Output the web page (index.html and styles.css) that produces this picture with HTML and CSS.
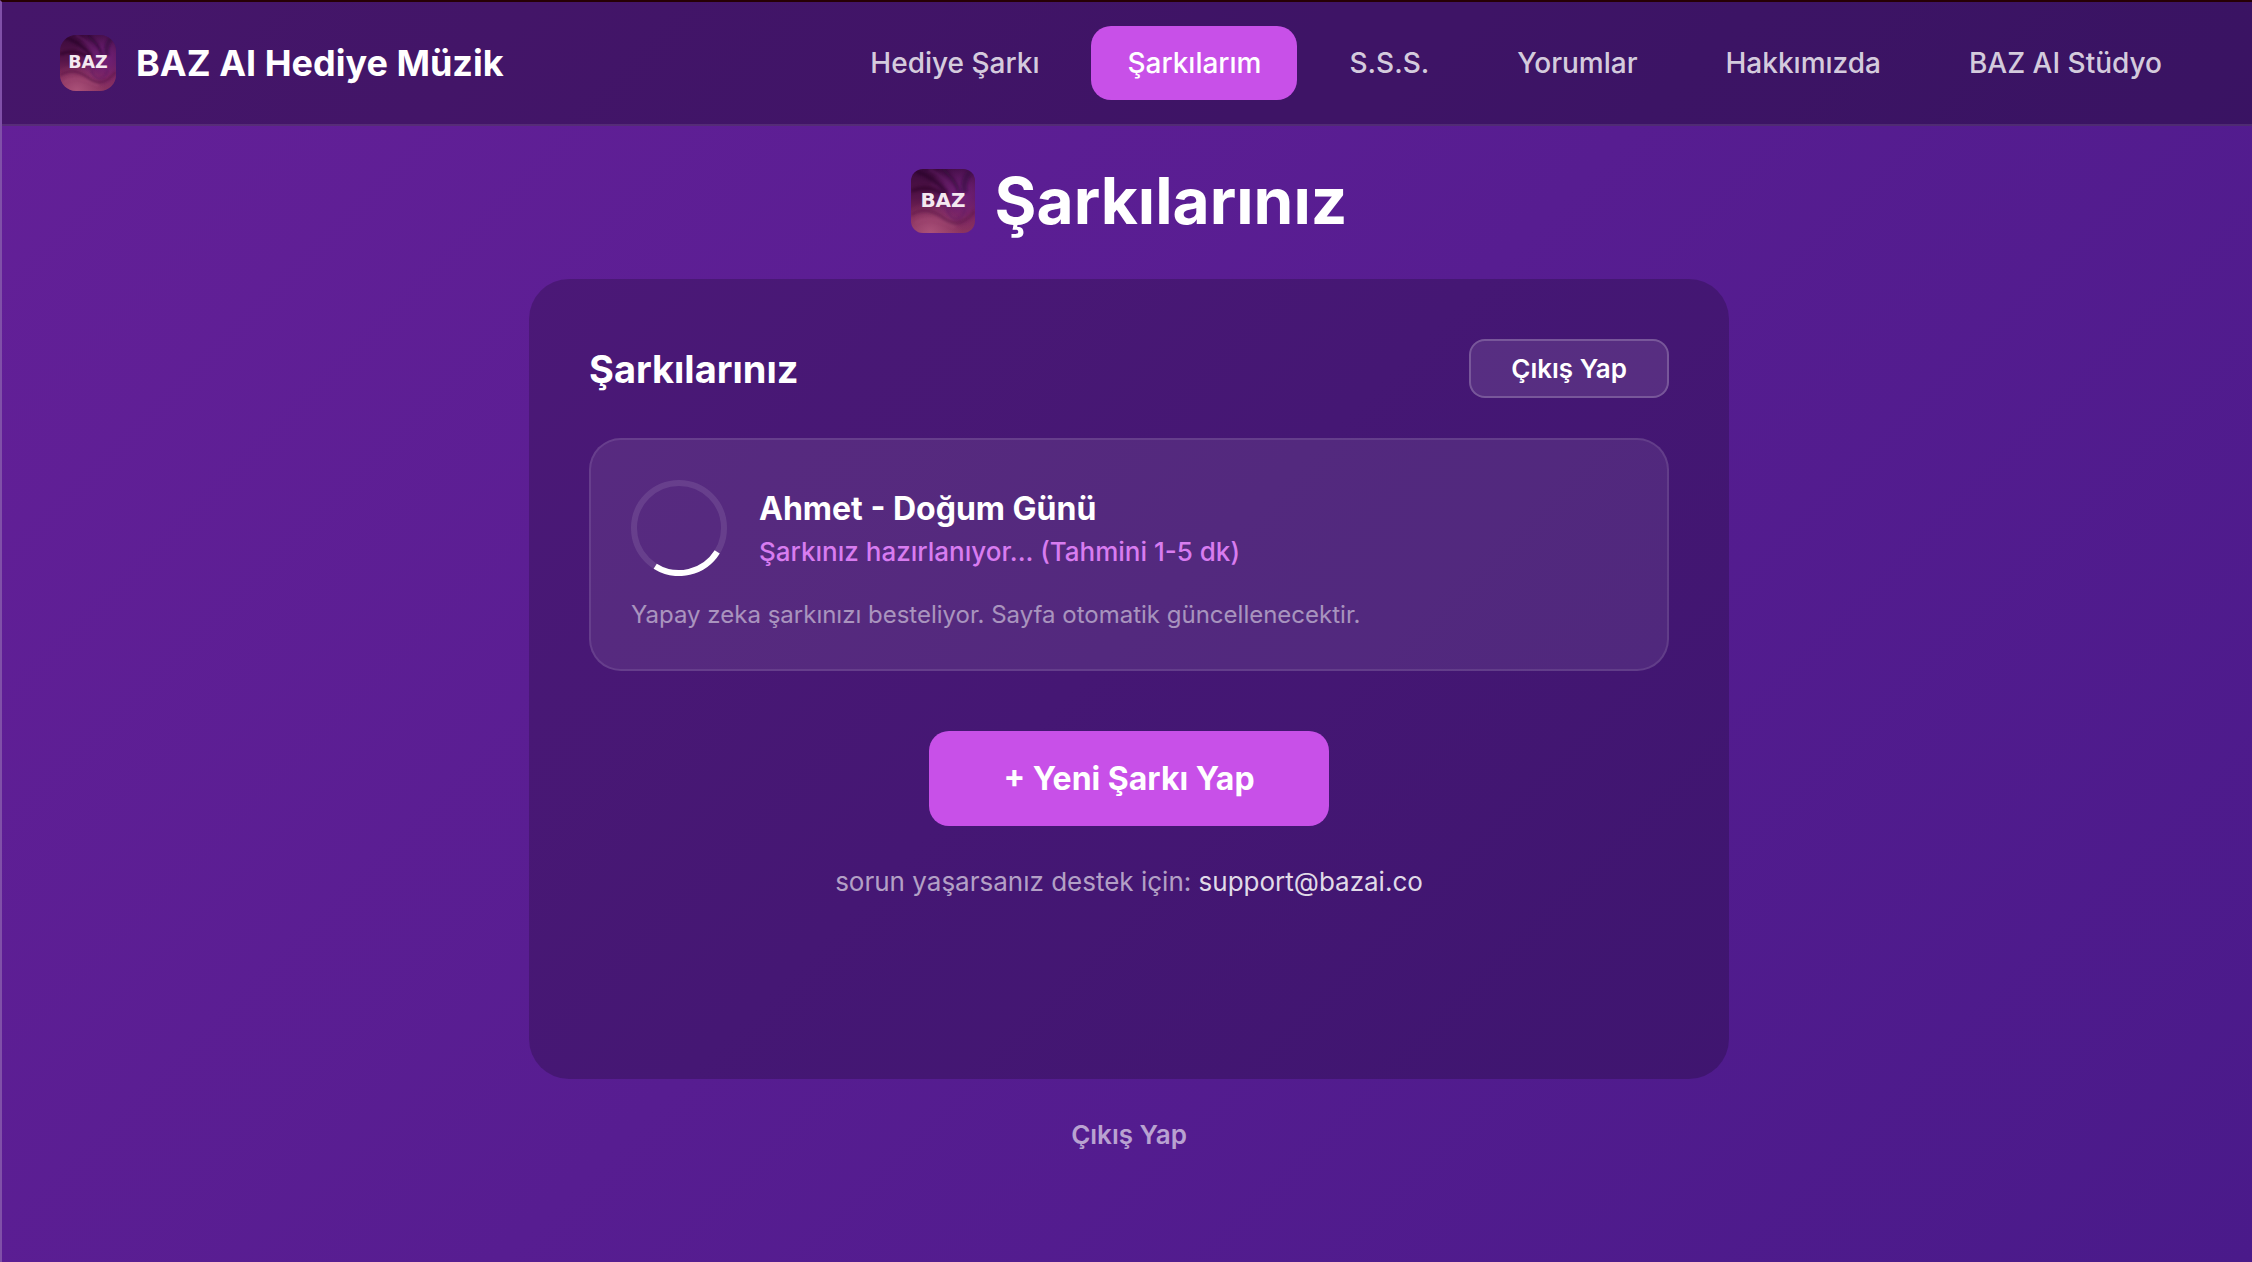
FILE: index.html
```html
<!DOCTYPE html>
<html lang="tr">
<head>
  <meta charset="UTF-8" />
  <meta name="viewport" content="width=device-width, initial-scale=1" />
  <title>Şarkılarınız - BAZ AI Hediye Müzik</title>
  <link rel="stylesheet" href="styles.css">
</head>
<body>
  <!-- Shared paint for both logos -->
  <svg class="defs" width="0" height="0" aria-hidden="true">
    <defs>
      <linearGradient id="logo-base" x1="0" y1="0" x2="0" y2="1">
        <stop offset="0" stop-color="#3a0a3c" />
        <stop offset="0.45" stop-color="#561449" />
        <stop offset="0.75" stop-color="#7f2858" />
        <stop offset="1" stop-color="#8a3460" />
      </linearGradient>
      <radialGradient id="logo-violet" cx="0.8" cy="0.4" r="0.55">
        <stop offset="0" stop-color="#7a2488" stop-opacity="0.8" />
        <stop offset="1" stop-color="#7a2488" stop-opacity="0" />
      </radialGradient>
      <radialGradient id="logo-glow" cx="0.3" cy="1" r="0.5">
        <stop offset="0" stop-color="#b3597f" stop-opacity="0.8" />
        <stop offset="1" stop-color="#b3597f" stop-opacity="0" />
      </radialGradient>
      <filter id="logo-soft"><feGaussianBlur stdDeviation="1.5" /></filter>
      <symbol id="logo" viewBox="0 0 64 64" preserveAspectRatio="none">
        <rect width="64" height="64" fill="url(#logo-base)" />
        <rect width="64" height="64" fill="url(#logo-violet)" />
        <rect width="64" height="64" fill="url(#logo-glow)" />
        <g fill="none" opacity="0.6" filter="url(#logo-soft)">
          <path d="M4 2C18 6 28 14 36 24" stroke="#260528" stroke-width="4" />
          <path d="M18 0C30 6 38 14 42 24" stroke="#6d2470" stroke-width="2" />
          <path d="M32 0C40 8 46 14 48 24" stroke="#2b0733" stroke-width="3" />
          <path d="M60 2C54 8 52 16 54 24" stroke="#35093f" stroke-width="6" />
          <path d="M0 22C14 16 26 20 36 28" stroke="#2c0628" stroke-width="4" />
          <path d="M0 46C12 38 24 42 34 50S54 54 64 42" stroke="#5c1746" stroke-width="3" />
          <path d="M36 40C38 52 52 54 54 40" stroke="#5a1660" stroke-width="2" />
          <path d="M4 54C18 46 30 52 44 58" stroke="#a34a73" stroke-width="2" />
        </g>
        <text class="logo-text" x="32" y="38" text-anchor="middle">BAZ</text>
      </symbol>
    </defs>
  </svg>

  <header class="navbar">
    <a class="brand" href="#">
      <svg class="brand-logo" aria-hidden="true"><use href="#logo" /></svg>
      <span>BAZ AI Hediye Müzik</span>
    </a>
    <nav class="nav-links">
      <a href="#">Hediye Şarkı</a>
      <a class="active" href="#">Şarkılarım</a>
      <a href="#">S.S.S.</a>
      <a href="#">Yorumlar</a>
      <a href="#">Hakkımızda</a>
      <a href="#">BAZ AI Stüdyo</a>
    </nav>
  </header>

  <main class="page">
    <h1 class="page-title">
      <svg class="title-logo" aria-hidden="true"><use href="#logo" /></svg>
      Şarkılarınız
    </h1>

    <section class="panel">
      <div class="panel-header">
        <h2>Şarkılarınız</h2>
        <button class="logout-btn" type="button">Çıkış Yap</button>
      </div>

      <article class="song-card">
        <div class="song-row">
          <svg class="spinner" viewBox="0 0 96 96" aria-hidden="true">
            <circle class="spinner-track" cx="48" cy="48" r="45" />
            <path class="spinner-arc" d="M86.200 71.800A45 45 0 0 1 24.200 86.200" />
          </svg>
          <div>
            <h3>Ahmet - Doğum Günü</h3>
            <p class="song-status">Şarkınız hazırlanıyor... (Tahmini 1-5 dk)</p>
          </div>
        </div>
        <p class="song-note">Yapay zeka şarkınızı besteliyor. Sayfa otomatik güncellenecektir.</p>
      </article>

      <button class="new-btn" type="button">+ Yeni Şarkı Yap</button>
      <p class="support">sorun yaşarsanız destek için: <a href="mailto:support@bazai.co">support@bazai.co</a></p>
    </section>

    <button class="logout-link" type="button">Çıkış Yap</button>
  </main>
</body>
</html>
```

FILE: styles.css
```css
* {
  box-sizing: border-box;
}

body {
  margin: 0;
  min-height: 100vh;
  font-family: Inter, 'Liberation Sans', sans-serif;
  color: white;
  background: linear-gradient(135deg, #642098 0%, #4a1a8a 100%);
  border-top: 2px solid #260004;
  border-left: 2px solid #8050a8;
}

h1, h2, h3, p {
  margin: 0;
}

a {
  color: inherit;
  text-decoration: none;
}

button {
  font-family: inherit;
  color: white;
  cursor: pointer;
}

.defs {
  position: absolute;
}

.logo-text {
  font-family: 'DejaVu Sans', sans-serif;
  font-size: 20px;
  font-weight: 700;
  fill: #f4e8f0;
}

.navbar {
  display: flex;
  align-items: center;
  justify-content: space-between;
  padding: 24px 54px 24px 58px;
  background: rgba(0, 0, 0, 0.3);
  border-bottom: 2px solid rgba(255, 255, 255, 0.1);
}

.brand {
  display: flex;
  align-items: center;
  gap: 20px;
  font-size: 36px;
  font-weight: 700;
}

.brand-logo {
  width: 56px;
  height: 56px;
  border-radius: 16px;
}

.nav-links {
  display: flex;
  gap: 16px;
}

.nav-links a {
  padding: 20px 36px;
  border-radius: 20px;
  font-size: 28px;
  line-height: 34px;
  font-weight: 500;
  color: rgba(255, 255, 255, 0.8);
}

.nav-links .active {
  background: #c850e8;
  color: white;
}

.page {
  display: flex;
  flex-direction: column;
  align-items: center;
  padding: 36px 0 80px 4px;
}

.page-title {
  display: flex;
  align-items: center;
  gap: 20px;
  margin-bottom: 40px;
  font-size: 64px;
  line-height: 77px;
  font-weight: 700;
}

.title-logo {
  width: 64px;
  height: 64px;
  border-radius: 12px;
}

.panel {
  width: 100%;
  max-width: 1200px;
  min-height: 800px;
  padding: 60px;
  border-radius: 40px;
  background: rgba(0, 0, 0, 0.2);
  text-align: center;
}

.panel-header {
  display: flex;
  align-items: center;
  justify-content: space-between;
  margin-bottom: 40px;
}

.panel-header h2 {
  font-size: 38px;
  line-height: 46px;
  font-weight: 700;
}

.logout-btn {
  padding: 12px 40px;
  border: 2px solid rgba(255, 255, 255, 0.2);
  border-radius: 16px;
  background: rgba(255, 255, 255, 0.1);
  font-size: 26px;
  line-height: 31px;
  font-weight: 600;
}

.song-card {
  margin-bottom: 60px;
  padding: 40px;
  border: 2px solid rgba(255, 255, 255, 0.1);
  border-radius: 32px;
  background: rgba(255, 255, 255, 0.08);
  text-align: left;
}

.song-row {
  display: flex;
  align-items: center;
  gap: 32px;
  margin-bottom: 24px;
}

.spinner {
  width: 96px;
  height: 96px;
}

.spinner-track,
.spinner-arc {
  fill: none;
  stroke-width: 6;
}

.spinner-track {
  stroke: rgba(255, 255, 255, 0.1);
}

.spinner-arc {
  stroke: white;
}

.song-row h3 {
  margin-bottom: 8px;
  font-size: 32px;
  line-height: 39px;
  font-weight: 700;
}

.song-status {
  font-size: 26px;
  line-height: 31px;
  font-weight: 500;
  color: #d87cf0;
}

.song-note {
  font-size: 24px;
  line-height: 29px;
  color: rgba(255, 255, 255, 0.5);
}

.new-btn {
  padding: 28px 74px;
  border: none;
  border-radius: 20px;
  background: #c850e8;
  font-size: 32px;
  line-height: 39px;
  font-weight: 700;
}

.support {
  margin-top: 40px;
  font-size: 26px;
  line-height: 31px;
  color: rgba(255, 255, 255, 0.6);
}

.support a {
  color: rgba(255, 255, 255, 0.85);
}

.logout-link {
  margin-top: 40px;
  padding: 0;
  border: none;
  background: none;
  font-size: 26px;
  line-height: 31px;
  font-weight: 600;
  color: rgba(255, 255, 255, 0.6);
}
```
